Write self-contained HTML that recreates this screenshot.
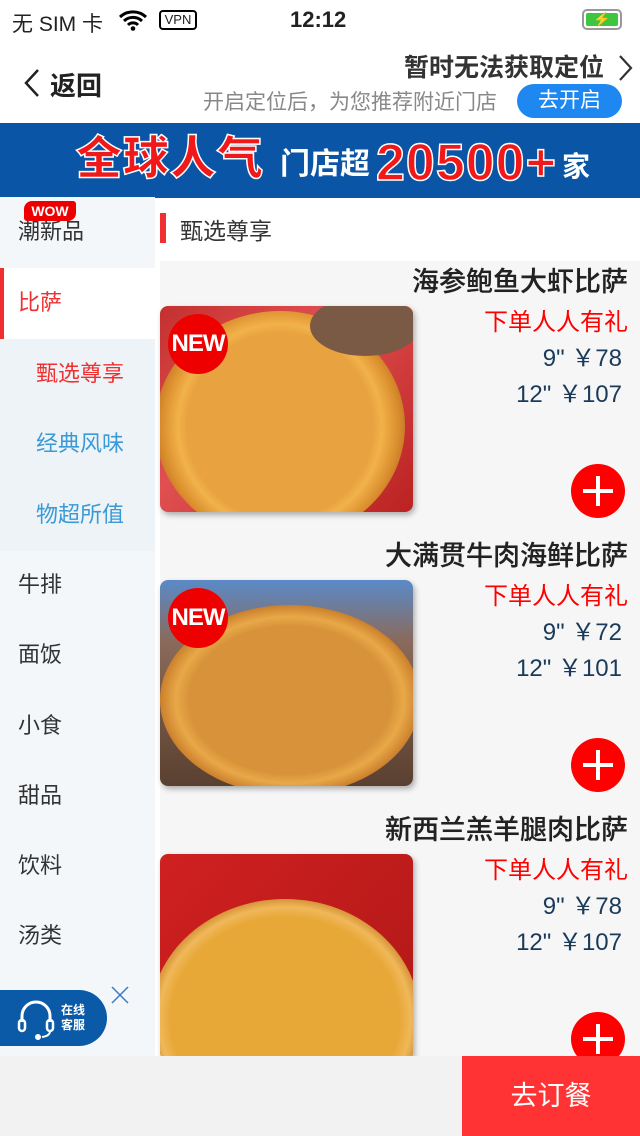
<!DOCTYPE html><html><head><meta charset="utf-8"><style>
*{margin:0;padding:0;box-sizing:border-box}
body{width:640px;height:1136px;overflow:hidden;background:#fff;font-family:"Liberation Sans","Noto Sans CJK SC",sans-serif;position:relative;color:#222}
.abs{position:absolute}
.side{left:0;top:197px;width:155px;height:859px;background:#f4f7fa}
.it{position:absolute;left:0;width:155px;height:70.5px;line-height:70.5px;padding-left:18px;font-size:22px;color:#333}
.sub{background:#eef3f7;color:#3a9ad6;padding-left:36px}
.card{position:absolute;left:160px;width:480px;height:274px;background:#f6f6f6}
.title{position:absolute;right:12px;top:2px;font-size:27px;color:#222;line-height:38px;font-weight:500;text-shadow:0 0 0.4px #222}
.gift{position:absolute;right:12px;top:46px;font-size:24px;color:#f00;line-height:32px}
.pr{position:absolute;right:18px;font-size:24px;color:#1a3a5a;line-height:32px}
.img{position:absolute;left:0;top:45px;width:253px;height:206px;border-radius:8px;overflow:hidden;box-shadow:2px 3px 6px rgba(0,0,0,.3)}
.pz{position:absolute;border-radius:50%;background:radial-gradient(circle,#e8a340 0 55%,#f2b24a 60%,#d98c2c 70%,#c77a28 74%,transparent 75%)}
.new{position:absolute;left:8px;top:8px;width:60px;height:60px;border-radius:50%;background:#e00;color:#fff;font-weight:bold;font-size:24px;line-height:60px;text-align:center;letter-spacing:-1px}
.plus{position:absolute;right:15px;top:203px;width:54px;height:54px;border-radius:50%;background:#f00}
.plus:before{content:"";position:absolute;left:12px;top:25px;width:30px;height:4px;background:#fff}
.plus:after{content:"";position:absolute;left:25px;top:12px;width:4px;height:30px;background:#fff}
.bn{position:absolute;line-height:1;white-space:nowrap}
</style></head><body>
<div class="abs" style="left:12px;top:8px;font-size:21px">无 SIM 卡</div>
<svg class="abs" style="left:118px;top:9px" width="30" height="22" viewBox="0 0 30 22"><path d="M2 8a19 19 0 0 1 26 0M6 12a13 13 0 0 1 18 0M10 16a7 7 0 0 1 10 0" stroke="#000" stroke-width="3" fill="none"/><circle cx="15" cy="19.5" r="2.3"/></svg>
<div class="abs" style="left:159px;top:10px;width:38px;height:20px;border:2px solid #000;border-radius:4px;font-size:13px;line-height:16px;text-align:center">VPN</div>
<div class="abs" style="left:290px;top:7px;font-size:22px;font-weight:bold">12:12</div>
<div class="abs" style="left:582px;top:9px;width:40px;height:21px;border:2px solid #999;border-radius:5px;padding:2px"><div style="width:100%;height:100%;background:#3fc63f;border-radius:2px;color:#000;font-size:14px;line-height:13px;text-align:center">⚡</div></div>
<svg class="abs" style="left:22px;top:68px" width="20" height="30"><path d="M16 2L4 15l12 13" stroke="#222" stroke-width="2.5" fill="none"/></svg>
<div class="abs" style="left:50px;top:66px;font-size:26px;font-weight:bold">返回</div>
<div class="abs" style="right:36px;top:48px;font-size:25px;font-weight:bold;color:#333">暂时无法获取定位</div>
<svg class="abs" style="left:618px;top:54px" width="16" height="28"><path d="M2 2l11 12L2 26" stroke="#333" stroke-width="2.2" fill="none"/></svg>
<div class="abs" style="left:203px;top:86px;font-size:21px;color:#888">开启定位后，为您推荐附近门店</div>
<div class="abs" style="left:517px;top:84px;width:105px;height:34px;border-radius:17px;background:#1e88f0;color:#fff;font-size:21px;line-height:34px;text-align:center">去开启</div>
<div class="abs" style="left:0;top:123px;width:640px;height:75px;background:#0a55a5;overflow:hidden">
<div class="bn" style="left:76px;top:12px;font-size:46px;font-weight:900;color:#f01818;-webkit-text-stroke:1.5px #fff;letter-spacing:1px">全球人气</div>
<div class="bn" style="left:280px;top:27px;font-size:30px;font-weight:bold;color:#fff">门店超</div>
<div class="bn" style="left:376px;top:14px;font-size:52px;font-weight:900;color:#f01818;-webkit-text-stroke:1.5px #fff;letter-spacing:1px">20500+</div>
<div class="bn" style="left:562px;top:30px;font-size:28px;font-weight:bold;color:#fff">家</div>
</div>
<div class="abs side">
<div class="it" style="top:0">潮新品</div>
<div class="abs" style="left:24px;top:4px;width:52px;height:20px;background:#e00;color:#fff;font-size:14px;font-weight:bold;text-align:center;line-height:20px;border-radius:8px 3px 8px 3px">WOW</div>
<div class="it" style="top:71px;background:#fff;color:#f03030;border-left:4px solid #f03030;padding-left:14px">比萨</div>
<div class="it sub" style="top:142px;color:#f03030">甄选尊享</div>
<div class="it sub" style="top:212px">经典风味</div>
<div class="it sub" style="top:283px">物超所值</div>
<div class="it" style="top:353px">牛排</div>
<div class="it" style="top:423px">面饭</div>
<div class="it" style="top:494px">小食</div>
<div class="it" style="top:564px">甜品</div>
<div class="it" style="top:634px">饮料</div>
<div class="it" style="top:704px">汤类</div>
</div>
<div class="abs" style="left:0;top:990px;width:107px;height:56px;background:#0a5aa8;border-radius:0 28px 28px 0"></div>
<svg class="abs" style="left:16px;top:1000px" width="40" height="40"><path d="M6 22v-6a14 14 0 0 1 28 0v6" stroke="#fff" stroke-width="3" fill="none"/><rect x="3" y="20" width="6" height="11" rx="3" fill="none" stroke="#fff" stroke-width="2.5"/><rect x="31" y="20" width="6" height="11" rx="3" fill="none" stroke="#fff" stroke-width="2.5"/><path d="M34 31q0 5-8 6" stroke="#fff" stroke-width="2" fill="none"/><circle cx="22" cy="37" r="3" fill="#fff"/></svg>
<div class="abs" style="left:61px;top:1003px;font-size:12px;color:#fff;font-weight:bold;line-height:15px">在线<br>客服</div>
<svg class="abs" style="left:110px;top:985px" width="20" height="20"><path d="M2 2l16 16M18 2L2 18" stroke="#3a7ac0" stroke-width="1.5"/></svg>
<div class="abs" style="left:160px;top:213px;width:6px;height:30px;background:#f03030"></div>
<div class="abs" style="left:180px;top:212px;font-size:23px;color:#333">甄选尊享</div>

<div class="card" style="top:261px"><div class="title">海参鲍鱼大虾比萨</div><div class="gift">下单人人有礼</div><div class="pr" style="top:82px">9"&nbsp;￥78</div><div class="pr" style="top:118px">12"&nbsp;￥107</div>
<div class="img" style="background:linear-gradient(135deg,#c43030,#e05050 40%,#b22)"><div class="pz" style="left:-5px;top:5px;width:250px;height:230px"></div><div class="abs" style="left:150px;top:-10px;width:110px;height:60px;border-radius:50%;background:#7a5a45"></div><div class="new">NEW</div></div><div class="plus"></div></div>

<div class="card" style="top:535px"><div class="title">大满贯牛肉海鲜比萨</div><div class="gift">下单人人有礼</div><div class="pr" style="top:82px">9"&nbsp;￥72</div><div class="pr" style="top:118px">12"&nbsp;￥101</div>
<div class="img" style="background:linear-gradient(180deg,#5a8ac8,#8a6a5a 30%,#5a4030)"><div class="pz" style="left:0;top:25px;width:260px;height:190px;background:radial-gradient(ellipse,#d8933a 0 55%,#e8a848 62%,#c77a28 72%,#3a2a20 74%,transparent 76%)"></div><div class="new">NEW</div></div><div class="plus"></div></div>

<div class="card" style="top:809px"><div class="title">新西兰羔羊腿肉比萨</div><div class="gift">下单人人有礼</div><div class="pr" style="top:82px">9"&nbsp;￥78</div><div class="pr" style="top:118px">12"&nbsp;￥107</div>
<div class="img" style="background:linear-gradient(135deg,#d02020,#b01818)"><div class="pz" style="left:-10px;top:45px;width:270px;height:240px;background:radial-gradient(ellipse,#e8a838 0 60%,#f0b85a 66%,#d08a30 72%,#c02020 74%,transparent 80%)"></div></div><div class="plus"></div></div>

<div class="abs" style="left:0;top:1056px;width:640px;height:80px;background:#f2f2f2"></div>
<div class="abs" style="left:462px;top:1056px;width:178px;height:80px;background:#ff3333;color:#fff;font-size:27px;line-height:80px;text-align:center">去订餐</div>
</body></html>
